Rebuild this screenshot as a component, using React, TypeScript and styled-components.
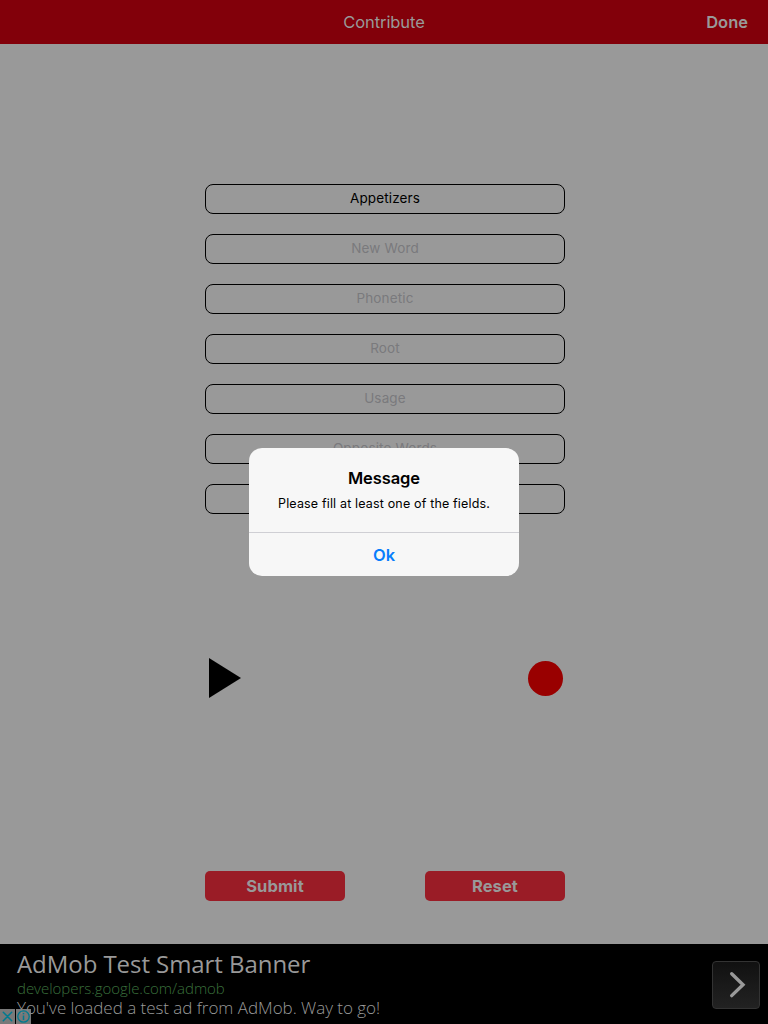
import React from "react";
import styled, { createGlobalStyle } from "styled-components";

const GlobalStyle = createGlobalStyle`
  * { box-sizing: border-box; }
  body { margin: 0; background: #999; font-family: Inter, "Liberation Sans", sans-serif; }
  button { font-family: inherit; cursor: pointer; }
`;

const Screen = styled.div`
  position: relative;
  display: flex;
  flex-direction: column;
  width: 768px;
  height: 1024px;
  overflow: hidden;
  background: #999;
`;

const NavBar = styled.header`
  display: grid;
  grid-template-columns: 1fr auto 1fr;
  align-items: center;
  height: 44px;
  padding: 1px 20px 0;
  background: #82000a;
  color: #999;
`;

const NavTitle = styled.h1`
  grid-column: 2;
  margin: 0;
  font-size: 16.5px;
  font-weight: 400;
  line-height: 43px;
  letter-spacing: -0.08px;
`;

const DoneButton = styled.button`
  justify-self: end;
  padding: 0;
  border: 0;
  background: none;
  color: inherit;
  font-size: 16.5px;
  font-weight: 600;
  line-height: 43px;
`;

const Form = styled.main`
  display: flex;
  flex: 1;
  flex-direction: column;
  width: 360px;
  margin-left: 205px;
  padding-top: 140px;
`;

const Fields = styled.div`
  display: flex;
  flex-direction: column;
  gap: 20px;
`;

const Field = styled.div<{ $filled?: boolean }>`
  height: 30px;
  border: 1px solid #000;
  border-radius: 8px;
  color: ${(p) => (p.$filled ? "#000" : "#7a7a7d")};
  font-size: 13.5px;
  line-height: 27px;
  letter-spacing: 0.14px;
  text-align: center;
`;

const Recorder = styled.div`
  display: flex;
  justify-content: space-between;
  align-items: center;
  height: 40px;
  margin-top: 144px;
  padding: 0 2px 0 4px;
`;

const RecordButton = styled.button`
  width: 35px;
  height: 35px;
  padding: 0;
  border: 0;
  border-radius: 50%;
  background: #990000;
`;

const Actions = styled.div`
  display: flex;
  justify-content: space-between;
  margin-top: 173px;
`;

const ActionButton = styled.button`
  width: 140px;
  height: 30px;
  padding: 0;
  border: 0;
  border-radius: 5px;
  background: #9a1c26;
  color: #999;
  font-size: 16.5px;
  font-weight: 700;
  line-height: 31px;
  letter-spacing: 0.08px;
`;

const Banner = styled.footer`
  position: relative;
  display: flex;
  justify-content: space-between;
  height: 80px;
  padding: 4px 8px 0 17px;
  background: #000;
  font-family: "Open Sans", "Noto Sans", sans-serif;
`;

const BannerTitle = styled.div`
  color: #999;
  font-size: 24px;
  line-height: 32px;
  letter-spacing: -0.06px;
  white-space: nowrap;
`;

const BannerLink = styled.div`
  color: #3a703c;
  font-size: 15px;
  font-weight: 300;
  line-height: 17px;
  letter-spacing: -0.03px;
`;

const BannerText = styled.div`
  color: #999;
  font-size: 17px;
  font-weight: 300;
  line-height: 22px;
  letter-spacing: -0.035px;
  white-space: nowrap;
`;

const BannerArrow = styled.div`
  display: flex;
  align-items: center;
  justify-content: center;
  width: 48px;
  height: 48px;
  margin-top: 13px;
  border: 1px solid #333;
  border-radius: 4px;
  background: linear-gradient(#111, #222);
`;

const AdBadges = styled.div`
  position: absolute;
  left: 0;
  bottom: 0;
  display: flex;
  gap: 1px;
`;

const AdBadge = styled.span`
  display: flex;
  width: 15px;
  height: 15px;
  background: rgba(134, 134, 134, 0.9);
`;

const Overlay = styled.div`
  position: absolute;
  inset: 0;
  display: flex;
  align-items: center;
  justify-content: center;
`;

const Alert = styled.section`
  width: 270px;
  height: 128px;
  border-radius: 13px;
  background: #f7f7f7;
  text-align: center;
`;

const AlertBody = styled.div`
  height: 85px;
  padding-top: 20px;
  border-bottom: 1px solid #cfcfd4;
`;

const AlertTitle = styled.h2`
  margin: 0;
  font-size: 16.5px;
  font-weight: 600;
  line-height: 21px;
  letter-spacing: -0.08px;
`;

const AlertMessage = styled.p`
  margin: 6px 0 0;
  font-size: 12.5px;
  line-height: 17px;
  letter-spacing: 0.16px;
`;

const AlertButton = styled.button`
  width: 100%;
  height: 43px;
  padding: 1px 0 0;
  border: 0;
  background: none;
  color: #087dfc;
  font-size: 16.5px;
  font-weight: 600;
  line-height: 42px;
`;

const placeholders = ["New Word", "Phonetic", "Root", "Usage", "Opposite Words"];

export default function App() {
  return (
    <>
      <GlobalStyle />
      <Screen>
        <NavBar>
          <NavTitle>Contribute</NavTitle>
          <DoneButton>Done</DoneButton>
        </NavBar>
        <Form>
          <Fields>
            <Field $filled>Appetizers</Field>
            {placeholders.map((label) => (
              <Field key={label}>{label}</Field>
            ))}
            <Field />
          </Fields>
          <Recorder>
            <svg width="32" height="40" viewBox="0 0 32 40">
              <path d="M0 0L32 20L0 40Z" fill="#000" />
            </svg>
            <RecordButton aria-label="Record" />
          </Recorder>
          <Actions>
            <ActionButton>Submit</ActionButton>
            <ActionButton>Reset</ActionButton>
          </Actions>
        </Form>
        <Banner>
          <div>
            <BannerTitle>AdMob Test Smart Banner</BannerTitle>
            <BannerLink>developers.google.com/admob</BannerLink>
            <BannerText>You've loaded a test ad from AdMob. Way to go!</BannerText>
          </div>
          <BannerArrow>
            <svg width="46" height="46" viewBox="0 0 46 46" fill="none">
              <path d="M18.7 11.8L30 22.7L18.7 33.6" stroke="#999" strokeWidth="3.4" strokeLinecap="round" />
            </svg>
          </BannerArrow>
          <AdBadges>
            <AdBadge>
              <svg width="15" height="15" viewBox="0 0 15 15">
                <path d="M3.3 3.3L11.7 11.7M11.7 3.3L3.3 11.7" stroke="#007a8f" strokeWidth="1.5" strokeLinecap="round" />
              </svg>
            </AdBadge>
            <AdBadge>
              <svg width="15" height="15" viewBox="0 0 15 15" fill="none" stroke="#007a8f">
                <circle cx="7.5" cy="7.5" r="5.7" strokeWidth="1.3" />
                <path d="M7.5 6.5V11M7.5 4V5.3" strokeWidth="1.5" />
              </svg>
            </AdBadge>
          </AdBadges>
        </Banner>
        <Overlay>
          <Alert>
            <AlertBody>
              <AlertTitle>Message</AlertTitle>
              <AlertMessage>Please fill at least one of the fields.</AlertMessage>
            </AlertBody>
            <AlertButton>Ok</AlertButton>
          </Alert>
        </Overlay>
      </Screen>
    </>
  );
}
